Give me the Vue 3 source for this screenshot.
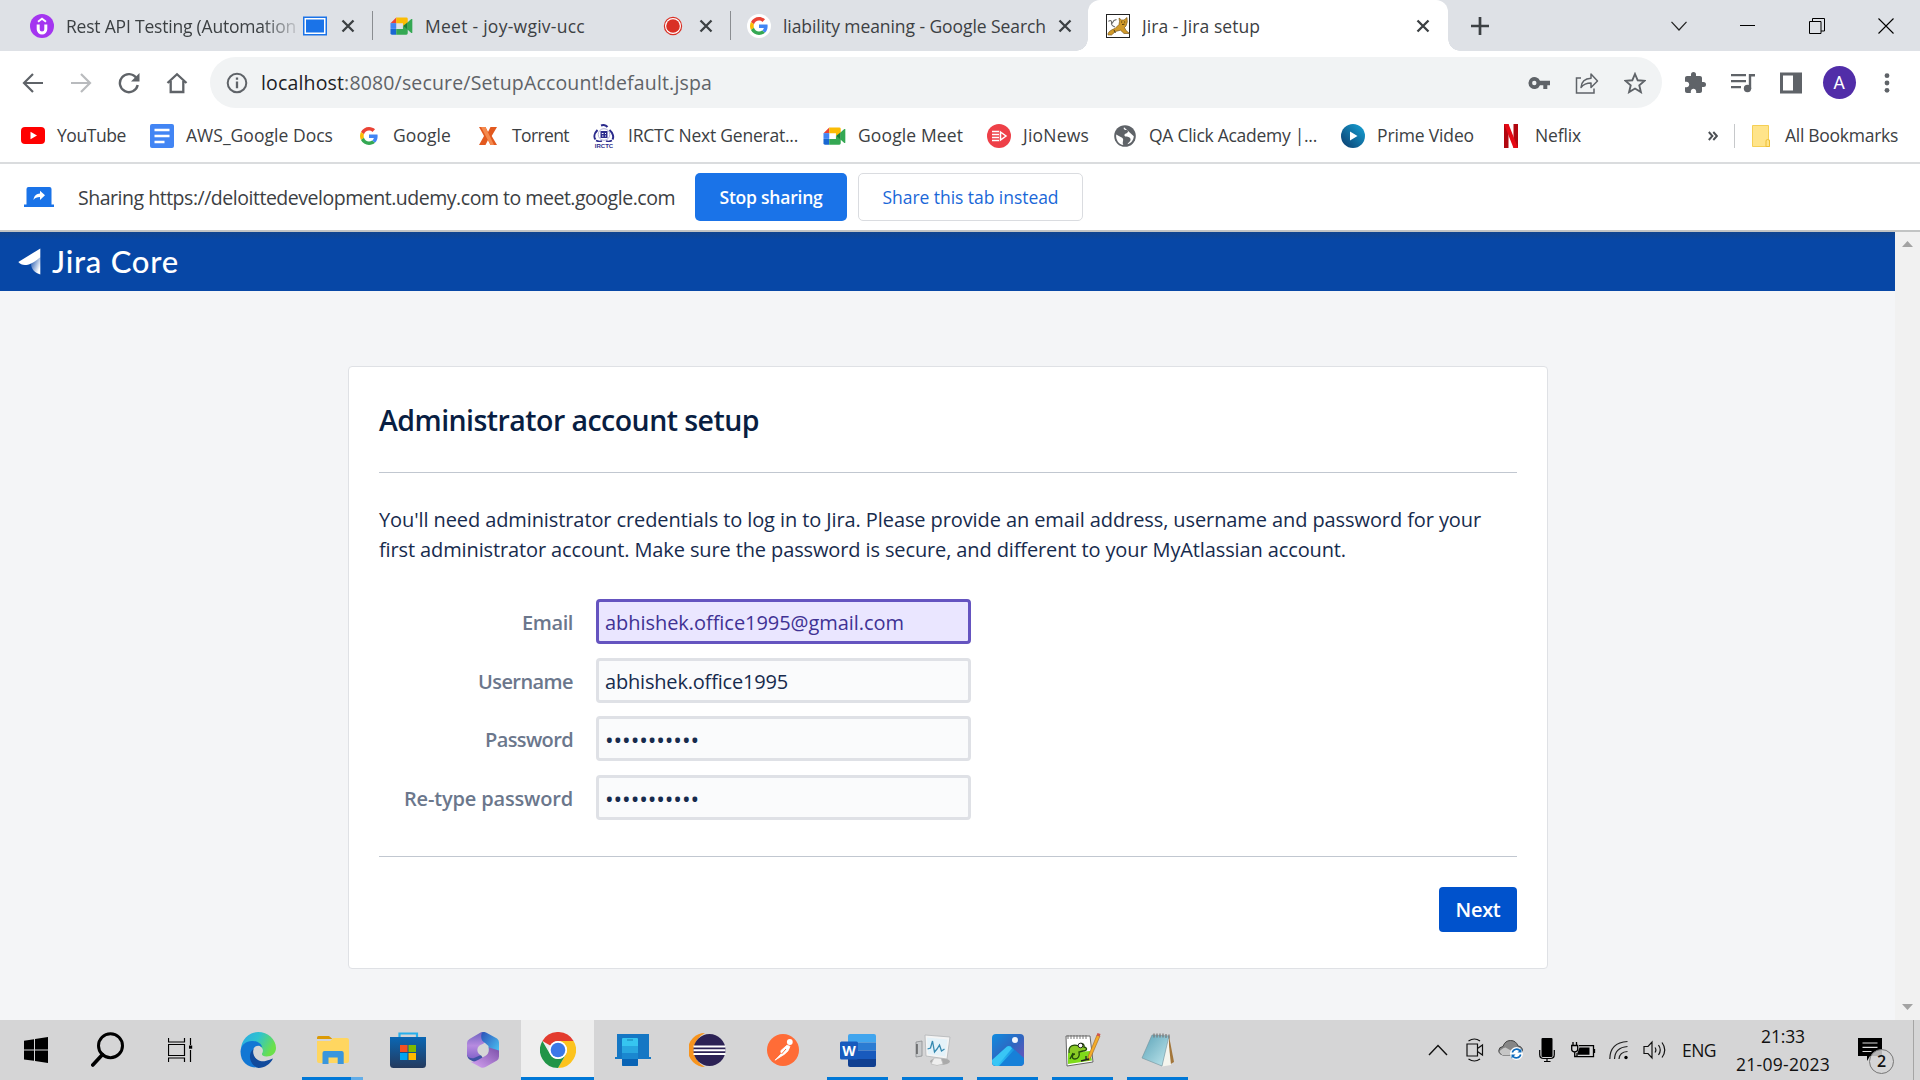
<script setup>
// Tracks the text so that the run takes up the given width in pixels.
const vFit = {
  mounted(el, binding) {
    const natural = el.getBoundingClientRect().width
    const count = el.textContent.length
    el.style.letterSpacing = (binding.value - natural) / count + 'px'
  },
}

const bookmarks = [
  { icon: 'youtube', label: 'YouTube', text: 69, width: 129 },
  { icon: 'docs', label: 'AWS_Google Docs', text: 147, width: 207 },
  { icon: 'google', label: 'Google', text: 58, width: 119 },
  { icon: 'torrent', label: 'Torrent', text: 57, width: 116 },
  { icon: 'irctc', label: 'IRCTC Next Generat...', text: 170, width: 230 },
  { icon: 'meet', label: 'Google Meet', text: 105, width: 165 },
  { icon: 'jio', label: 'JioNews', text: 66, width: 126 },
  { icon: 'globe', label: 'QA Click Academy |...', text: 168, width: 228 },
  { icon: 'prime', label: 'Prime Video', text: 97, width: 158 },
  { icon: 'netflix', label: 'Neflix', text: 46, width: 190 },
]

const fields = [
  { label: 'Email', labelWidth: 51, value: 'abhishek.office1995@gmail.com', valueWidth: 299, filled: true },
  { label: 'Username', labelWidth: 95, value: 'abhishek.office1995', valueWidth: 183 },
  { label: 'Password', labelWidth: 88, value: '•••••••••••', valueWidth: 94, secret: true },
  { label: 'Re-type password', labelWidth: 169, value: '•••••••••••', valueWidth: 94, secret: true },
]
</script>

<template>
  <div class="screen">
    <svg class="defs" width="0" height="0" aria-hidden="true">
      <defs>
        <symbol id="google" viewBox="0 0 48 48">
          <path fill="#ea4335" d="M24 9.5c3.54 0 6.71 1.22 9.21 3.6l6.85-6.85C35.9 2.38 30.47 0 24 0 14.62 0 6.51 5.38 2.56 13.22l7.98 6.19C12.43 13.72 17.74 9.5 24 9.5z" />
          <path fill="#4285f4" d="M46.98 24.55c0-1.57-.15-3.09-.38-4.55H24v9.02h12.94c-.58 2.96-2.26 5.48-4.78 7.18l7.73 6c4.51-4.18 7.09-10.36 7.09-17.65z" />
          <path fill="#fbbc05" d="M10.53 28.59c-.48-1.45-.76-2.99-.76-4.59s.27-3.14.76-4.59l-7.98-6.19C.92 16.46 0 20.12 0 24c0 3.88.92 7.54 2.56 10.78l7.97-6.19z" />
          <path fill="#34a853" d="M24 48c6.48 0 11.93-2.13 15.89-5.81l-7.73-6c-2.15 1.45-4.92 2.3-8.16 2.3-6.26 0-11.57-4.22-13.47-9.91l-7.98 6.19C6.51 42.62 14.62 48 24 48z" />
        </symbol>
        <symbol id="meet" viewBox="0 0 24 20">
          <path fill="#ea4335" d="M6.5 1v6H.5z" />
          <path fill="#4285f4" d="M.5 7h6v6h-6z" />
          <path fill="#1967d2" d="M.5 13h6v6H2a1.5 1.5 0 0 1-1.500-1.500z" />
          <path fill="#fbbc04" d="M6.500 1H17a1.500 1.500 0 0 1 1.500 1.500V7L13.500 10V7h-7z" />
          <path fill="#34a853" d="M6.500 13h7v-3l5 3v4.500A1.500 1.500 0 0 1 17 19H6.500z" />
          <path fill="#188038" d="M13.500 10l5-4v8z" />
          <path fill="#34a853" d="M18.500 6l3.700-3.200c.5-.4 1.100-.2 1.100.5v13.400c0 .7-.6.900-1.100.5L18.500 14z" />
        </symbol>
        <symbol id="close" viewBox="0 0 16 16">
          <path d="M2.500 2.500l11 11M13.500 2.500l-11 11" stroke="#3c4043" stroke-width="2.300" fill="none" />
        </symbol>
        <linearGradient id="gEdge" x1="0" y1="0" x2="1" y2="0.4">
          <stop offset="0" stop-color="#2aa7e6" /><stop offset=".5" stop-color="#2fc3cf" /><stop offset="1" stop-color="#6be04a" />
        </linearGradient>
        <linearGradient id="gBag" x1="0" y1="0" x2="0" y2="1">
          <stop offset="0" stop-color="#0a67b4" /><stop offset="1" stop-color="#243a5e" />
        </linearGradient>
        <linearGradient id="gViolet" x1="0" y1="0" x2="0" y2="1">
          <stop offset="0" stop-color="#6f62c0" /><stop offset=".5" stop-color="#b78be0" /><stop offset="1" stop-color="#8060c8" />
        </linearGradient>
        <linearGradient id="gSky" x1="0" y1="0" x2="1" y2="1">
          <stop offset="0" stop-color="#2b50b8" /><stop offset="1" stop-color="#4fd0f8" />
        </linearGradient>
        <linearGradient id="gOrchid" x1="0" y1="1" x2="1" y2="0">
          <stop offset="0" stop-color="#d9a6f5" /><stop offset="1" stop-color="#7a4fa8" />
        </linearGradient>
        <linearGradient id="gPhoto" x1="0" y1="0" x2="1" y2="1">
          <stop offset="0" stop-color="#0f8ce0" /><stop offset=".5" stop-color="#2f66c0" /><stop offset="1" stop-color="#7a4fb8" />
        </linearGradient>
        <linearGradient id="gHill" x1="0" y1="1" x2="1" y2="0">
          <stop offset="0" stop-color="#30c8f8" /><stop offset="1" stop-color="#1690e0" />
        </linearGradient>
        <linearGradient id="gPrime" x1="0" y1="1" x2="1" y2="0">
          <stop offset="0" stop-color="#0b3a6b" /><stop offset="1" stop-color="#17a5d8" />
        </linearGradient>
        <linearGradient id="gMark" x1="0.100" y1="0.100" x2="0.900" y2="0.700">
          <stop offset="0" stop-color="#2f62b4" /><stop offset="1" stop-color="#fff" />
        </linearGradient>
        <linearGradient id="gPad" x1="0" y1="0" x2="1" y2="1">
          <stop offset="0" stop-color="#5ba3b8" /><stop offset="1" stop-color="#c2e8ee" />
        </linearGradient>
      </defs>
    </svg>

    <!-- Tab strip -->
    <header class="tabs">
      <div class="tab tab-udemy">
        <svg width="24" height="24" viewBox="0 0 24 24"><circle cx="12" cy="12" r="12" fill="#a435f0" /><path d="M8.200 10.500v4.800a3.800 3.800 0 0 0 7.600 0v-4.800" fill="none" stroke="#fff" stroke-width="3" /><path d="M8 7.800l4-3 4 3" fill="none" stroke="#fff" stroke-width="1.900" /></svg>
        <div class="tab-title fade"><span v-fit="230">Rest API Testing (Automation</span></div>
        <svg class="capture" width="24" height="20" viewBox="0 0 24 20"><rect x=".75" y="1.250" width="22.500" height="17.500" fill="#fff" stroke="#1a73e8" stroke-width="1.500" /><rect x="3" y="3.500" width="18" height="13" fill="#1a73e8" /></svg>
        <svg class="x1" width="16" height="16"><use href="#close" /></svg>
      </div>
      <i class="tab-rule"></i>
      <div class="tab tab-meet">
        <svg width="23" height="20"><use href="#meet" /></svg>
        <div class="tab-title"><span v-fit="160">Meet - joy-wgiv-ucc</span></div>
        <svg width="20" height="20" viewBox="0 0 20 20"><circle cx="10" cy="10" r="8.600" fill="#fff" stroke="#d93025" stroke-width="1.200" /><circle cx="10" cy="10" r="6.800" fill="#d93025" /></svg>
        <svg class="x2" width="16" height="16"><use href="#close" /></svg>
      </div>
      <i class="tab-rule"></i>
      <div class="tab tab-search">
        <span class="disc"><svg width="18" height="18"><use href="#google" /></svg></span>
        <div class="tab-title"><span v-fit="263">liability meaning - Google Search</span></div>
        <svg width="16" height="16"><use href="#close" /></svg>
      </div>
      <div class="tab tab-active">
        <svg width="24" height="24" viewBox="0 0 24 24"><rect x=".5" y=".5" width="23" height="23" fill="#fff" stroke="#222" /><path d="M2 19.500c1-2.500 4-4 7-5l4-4 .5-3-.5-3.500 2.500 2h2.500l3-2.500.3 4.500-1.300 4-1.500 1.500 1.500 3 3.500 3H18l-3.500-3.300-5 1.300-4 3.500H2z" fill="#d19a2a" stroke="#6b4a10" stroke-width=".6" /><path d="M2.500 7.500c2-2 3.500-.5 3 1.500s1 3 3.500 4M6 9.500l2-3 2.500-1" fill="none" stroke="#6a6a6a" stroke-width="1.100" /><path d="M15 8h1.200M18 8h1.200M16 10.500l2.500-.3M8 16l1.500 3" stroke="#2d2309" stroke-width=".8" /></svg>
        <div class="tab-title"><span v-fit="118">Jira - Jira setup</span></div>
        <svg width="16" height="16"><use href="#close" /></svg>
      </div>
      <svg class="plus" width="20" height="20" viewBox="0 0 20 20"><path d="M10 1v18M1 10h18" stroke="#3c4043" stroke-width="2.700" /></svg>
      <div class="window">
        <span><svg width="16" height="10" viewBox="0 0 16 10"><path d="M.5 .8L8 9 15.500 .8" fill="none" stroke="#222" stroke-width="1.200" /></svg></span>
        <span><svg width="15" height="3" viewBox="0 0 15 3"><path d="M0 1.500h15" stroke="#000" /></svg></span>
        <span><svg width="16" height="16" viewBox="0 0 16 16"><path d="M.5 3.500h11.500v12H.5zM3.500 3.500V.5h12V13H12" fill="none" stroke="#000" /></svg></span>
        <span><svg width="16" height="16" viewBox="0 0 16 16"><path d="M.5 .5l15 15M15.500 .5l-15 15" stroke="#000" stroke-width="1.100" /></svg></span>
      </div>
    </header>

    <!-- Toolbar -->
    <div class="toolbar">
      <span class="tool"><svg width="22" height="22" viewBox="0 0 22 22"><path d="M21 11H2.500M11 2L2 11l9 9" fill="none" stroke="#5f6368" stroke-width="2.200" /></svg></span>
      <span class="tool"><svg width="22" height="22" viewBox="0 0 22 22"><path d="M1 11h18.500M11 2l9 9-9 9" fill="none" stroke="#b9bbbe" stroke-width="2.200" /></svg></span>
      <span class="tool"><svg width="22" height="22" viewBox="0 0 22 22"><path d="M18.300 6A9 9 0 1 0 19.700 13" fill="none" stroke="#5f6368" stroke-width="2.400" /><path d="M21.500 1v8.500H13z" fill="#5f6368" /></svg></span>
      <span class="tool"><svg width="22" height="22" viewBox="0 0 22 22"><path d="M1.500 11L11 2.200 20.500 11M4.700 9v11h12.600V9" fill="none" stroke="#5f6368" stroke-width="2.300" /></svg></span>
      <div class="omnibox">
        <svg width="22" height="22" viewBox="0 0 22 22"><circle cx="11" cy="11" r="9.300" fill="none" stroke="#5f6368" stroke-width="2" /><path d="M11 9.500v6.700M11 5.500v2.300" stroke="#5f6368" stroke-width="2.300" /></svg>
        <div class="url"><span v-fit="451"><b>localhost</b>:8080/secure/SetupAccount!default.jspa</span></div>
        <span class="tool"><svg width="22" height="14" viewBox="0 0 22 14"><path fill="#5f6368" fill-rule="evenodd" d="M12 4.800A6 6 0 1 0 12 9.200h3.300V13h4V9.200H22V4.800zM6.300 4.800a2.200 2.200 0 1 1 0 4.400 2.200 2.200 0 0 1 0-4.400z" /></svg></span>
        <span class="tool"><svg width="24" height="22" viewBox="0 0 24 22"><path d="M6 6H1.500v15H19v-4.500" fill="none" stroke="#5f6368" stroke-width="1.500" /><path d="M6 15.500c.5-6 4-9 10-9.200V2l6.500 7-6.500 6.500V11c-4.500 0-7.500 1.200-10 4.500z" fill="none" stroke="#5f6368" stroke-width="1.500" stroke-linejoin="round" /></svg></span>
        <span class="tool"><svg width="22" height="22" viewBox="0 0 22 22"><path d="M11 2l2.700 6.300 6.800.6-5.200 4.500 1.600 6.700L11 16.500l-5.900 3.600 1.600-6.700L1.500 8.900l6.800-.6z" fill="none" stroke="#5f6368" stroke-width="1.900" /></svg></span>
      </div>
      <span class="tool tool-ext"><svg width="24" height="24" viewBox="0 0 24 24"><path fill="#5f6368" d="M20.500 11H19V7c0-1.100-.9-2-2-2h-4V3.500a2.500 2.500 0 0 0-5 0V5H4c-1.100 0-1.990.9-1.990 2v3.800H3.500c1.490 0 2.700 1.210 2.700 2.700s-1.210 2.700-2.700 2.700H2V20c0 1.100.9 2 2 2h3.800v-1.500c0-1.490 1.210-2.700 2.700-2.700s2.700 1.210 2.700 2.700V22H17c1.100 0 2-.9 2-2v-4h1.500a2.500 2.500 0 0 0 0-5z" /></svg></span>
      <span class="tool"><svg width="24" height="20" viewBox="0 0 24 20"><path d="M0 2.200h15M0 8.200h15M0 14.200h10" stroke="#5f6368" stroke-width="2.200" /><circle cx="16.500" cy="15.500" r="3.700" fill="#5f6368" /><path d="M19 16V2.200h5" fill="none" stroke="#5f6368" stroke-width="2.400" /></svg></span>
      <span class="tool"><svg width="22" height="22" viewBox="0 0 22 22"><path fill="#5f6368" fill-rule="evenodd" d="M0 .5h22v21H0zM3 3.500v15h10v-15z" /></svg></span>
      <span class="tool"><span class="avatar">A</span></span>
      <span class="tool"><svg width="6" height="20" viewBox="0 0 6 20"><circle cx="3" cy="2.700" r="2.400" fill="#5f6368" /><circle cx="3" cy="10" r="2.400" fill="#5f6368" /><circle cx="3" cy="17.300" r="2.400" fill="#5f6368" /></svg></span>
    </div>

    <!-- Bookmarks bar -->
    <nav class="bookmarks">
      <div v-for="b in bookmarks" :key="b.label" class="bookmark" :style="{ width: b.width + 'px' }">
        <span class="fav">
          <svg v-if="b.icon === 'youtube'" width="24" height="17" viewBox="0 0 24 17"><rect width="24" height="17" rx="4" fill="#f00" /><path d="M9.500 4.800l6.500 3.700-6.500 3.700z" fill="#fff" /></svg>
          <svg v-else-if="b.icon === 'docs'" width="24" height="24" viewBox="0 0 24 24"><rect width="24" height="24" rx="2" fill="#4285f4" /><path d="M4.500 6h15M4.500 12h15M4.500 18h10" stroke="#fff" stroke-width="2.500" /></svg>
          <svg v-else-if="b.icon === 'google'" width="18" height="18"><use href="#google" /></svg>
          <svg v-else-if="b.icon === 'torrent'" width="18" height="18" viewBox="0 0 18 18"><path d="M0 0h6.500L9 5l2.500-5H18l-5.300 9L18 18h-6.500L9 13l-2.500 5H0l5-9z" fill="#e2591f" /><path d="M2 0h4.500l8.500 18h-3.500z" fill="#f4894d" /></svg>
          <svg v-else-if="b.icon === 'irctc'" width="22" height="24" viewBox="0 0 22 24"><g fill="none" stroke="#2b2b8c" stroke-width="2"><path d="M8 1.500q4-1.500 6.500 1.500M4.500 6C1.500 9 .5 13 2.500 15.500M16.500 6c3.500 3 4.500 7 3 9.500" /><path d="M3 16.500q3 1.500 6 .5M13 17q3 1 6-.5" stroke-width="1.400" /></g><circle cx="11" cy="10.500" r="5.800" fill="none" stroke="#9a9acb" stroke-width=".8" /><rect x="7.500" y="7" width="7" height="7" fill="#2b2b8c" /><path d="M8.800 9.500h1.700m1.500 0h1M9 12h1.500m1.500 0h1" stroke="#fff" /><text x="11" y="23.500" text-anchor="middle" class="irctc">IRCTC</text></svg>
          <svg v-else-if="b.icon === 'meet'" width="23" height="20"><use href="#meet" /></svg>
          <svg v-else-if="b.icon === 'jio'" width="24" height="24" viewBox="0 0 24 24"><circle cx="12" cy="12" r="12" fill="#ee4048" /><path d="M5 7.500h7M5 10.500h7M5 13.500h7M5 16.500h7" stroke="#fff" stroke-width="1.600" /><path d="M13.500 8l5.500 4-5.500 4z" fill="none" stroke="#fff" stroke-width="1.500" /></svg>
          <svg v-else-if="b.icon === 'globe'" width="22" height="22" viewBox="0 0 22 22"><circle cx="11" cy="11" r="10.800" fill="#5f6368" /><path d="M10 2.300c-1 2.500 1 2.700 3 2.700s1 3-1 3.500-2 2.500-.5 3 4.500 0 5 2.500-2.500 3.500-3 5.300c4-1.200 6-4.300 6.300-8M2.200 9.500l4.500 2.500c2.500 1 2.800 2 2.300 4s-.2 3.500.5 4c-4.500-.5-8-5-7.300-10.500z" fill="#fff" /></svg>
          <svg v-else-if="b.icon === 'prime'" width="24" height="24" viewBox="0 0 24 24"><circle cx="12" cy="12" r="12" fill="url(#gPrime)" /><path d="M9 7.500l7.500 4.500L9 16.500z" fill="#fff" /></svg>
          <svg v-else width="14" height="24" viewBox="0 0 14 24"><path d="M0 0h4.500v24H0zM9.500 0H14v24H9.500z" fill="#b1060f" /><path d="M0 0h4.500L14 24H9.500z" fill="#e50914" /></svg>
        </span>
        <span v-fit="b.text" class="caption">{{ b.label }}</span>
      </div>
      <svg class="more" width="10" height="10" viewBox="0 0 10 10"><path d="M.8 1l3.600 4L.8 9M5.300 1l3.600 4-3.600 4" fill="none" stroke="#4b4f54" stroke-width="1.900" /></svg>
      <i class="bookmark-rule"></i>
      <svg class="folder" width="18" height="22" viewBox="0 0 18 22"><path d="M.5 .5h16v14l1 .5v6.500H.5z" fill="#ffe48a" stroke="#f5cf55" /><path d="M14 21.500V16q0-1.500 1.700-1.500t1.800 1.500v5.500z" fill="#ffe48a" stroke="#eebf35" /></svg>
      <span v-fit="113" class="caption">All Bookmarks</span>
    </nav>

    <!-- Sharing notice -->
    <div class="infobar">
      <svg width="30" height="20" viewBox="0 0 30 20"><path d="M2.500 17.500V2q0-2 2-2h21q2 0 2 2v15.500H30V20H0v-2.500z" fill="#1a73e8" /><path d="M9.500 13c.5-4.500 3-6.200 6.500-6.500V3.700l5 4.600-5 4.600V10c-3 0-5 .8-6.500 3z" fill="#fff" /></svg>
      <div class="infotext"><span v-fit="597">Sharing https://deloittedevelopment.udemy.com to meet.google.com</span></div>
      <button class="stop"><span v-fit="103">Stop sharing</span></button>
      <button class="share"><span v-fit="176">Share this tab instead</span></button>
    </div>

    <!-- Page -->
    <div class="viewport">
      <main class="page">
        <div class="jira">
          <svg width="23" height="27" viewBox="0 0 23 27"><path d="M22.300 9.500V26.500c-5-1.500-9.300-5-9.300-11z" fill="url(#gMark)" /><path d="M22.300 .5V9.500C18 13 15 14.500 13 15.500 8 18 3 17.500 .3 14z" fill="#fff" /></svg>
          <div class="brand"><span v-fit="127">Jira Core</span></div>
        </div>
        <section class="card">
          <h1><span v-fit="380">Administrator account setup</span></h1>
          <p>
            <span v-fit="1102">You'll need administrator credentials to log in to Jira. Please provide an email address, username and password for your</span>
            <span v-fit="967">first administrator account. Make sure the password is secure, and different to your MyAtlassian account.</span>
          </p>
          <form>
            <div v-for="f in fields" :key="f.label" class="field">
              <label><span v-fit="f.labelWidth">{{ f.label }}</span></label>
              <div class="input" :class="{ filled: f.filled, secret: f.secret }"><span v-fit="f.valueWidth">{{ f.value }}</span></div>
            </div>
          </form>
          <footer><button class="next"><span v-fit="45">Next</span></button></footer>
        </section>
      </main>
      <aside class="scrollbar">
        <svg width="11" height="6" viewBox="0 0 11 6"><path d="M0 6l5.500-6L11 6z" fill="#a3a3a3" /></svg>
        <svg width="11" height="6" viewBox="0 0 11 6"><path d="M0 0h11L5.500 6z" fill="#a3a3a3" /></svg>
      </aside>
    </div>

    <!-- Taskbar -->
    <div class="taskbar">
      <span class="sys"><svg width="24" height="26" viewBox="0 0 24 26"><path d="M0 3.700l10-1.500v10.200H0zM11 2l13-2v12.400H11zM0 13.500h10v10.200L0 22.400zM11 13.500h13V26l-13-1.900z" fill="#000" /></svg></span>
      <span class="sys"><svg width="34" height="36" viewBox="0 0 34 36"><circle cx="19.500" cy="13.700" r="12" fill="none" stroke="#000" stroke-width="3" /><path d="M11.500 22.500L1.800 33" stroke="#000" stroke-width="3.600" stroke-linecap="round" /></svg></span>
      <span class="sys"><svg width="25" height="26" viewBox="0 0 25 26"><path d="M.5 1v4h16V1M.5 25v-4h16v4M.5 7.500h16v11H.5zM22.500 1v7M22.500 13v12" fill="none" stroke="#000" stroke-width="1.200" /><path d="M21 8.500h3.200v3.200H21z" /></svg></span>
      <span class="app app-first"><svg width="36" height="36" viewBox="0 0 36 36"><path d="M1 18A17.500 17.500 0 0 1 18 0c10 0 18 7.500 18 16 0 5-4 8.500-9.500 8.500-3.500 0-5-1.500-4.500-3 1.500-2 1.200-5-1-6.500C16 10 4 10 1 18z" fill="url(#gEdge)" /><path d="M.5 19.500C1 12 7 8.500 13 9c5 .3 8.500 3 9.300 6.500-3-3-8-2-9 2C11 26 20 33 29 30.500 21 39 .5 37.500 .5 19.500z" fill="#1277d4" /><path d="M13.500 17c-2 8 5 13.500 12 12 3.500-.8 5.500-2 7.500-2.500-2.500 5.500-8.500 9.500-14.500 9.500C9 33 7.500 21 13.500 17z" fill="#114a9c" /></svg></span>
      <span class="app grouped"><svg width="32" height="28" viewBox="0 0 32 28"><path d="M0 1.500Q0 0 1.500 0H12l3.500 3H0z" fill="#dc9a05" /><path d="M0 5h13l3.500-3H30q2 0 2 2v21q0 2-2 2H2q-2 0-2-2z" fill="#ffd660" /><path d="M5.500 28V17q0-2 2-2h17.200q2 0 2 2v11h-6v-6.500h-9.200V28z" fill="#3a96dd" /></svg></span>
      <span class="app"><svg width="36" height="36" viewBox="0 0 36 36"><path d="M9.500 7V1.500h17.500V7" fill="none" stroke="#27b0ec" stroke-width="2.200" /><path d="M0 5h36v27.500q0 3.500-3.500 3.500h-29Q0 36 0 32.500z" fill="url(#gBag)" /><path d="M10 13h7.500v7H10z" fill="#f25022" /><path d="M18.500 13H26v7h-7.500z" fill="#7fba00" /><path d="M10 21h7.500v7H10z" fill="#00a4ef" /><path d="M18.500 21H26v7h-7.500z" fill="#ffb900" /></svg></span>
      <span class="app"><svg width="32" height="36" viewBox="0 0 32 36"><path d="M14.500 0L2.500 7Q0 8.500 0 11v13l4 3.500 9-3V14l7-5-3-7z" fill="url(#gViolet)" /><path d="M15 .3q2-.8 4 .2l11 6q2 1.500 2 4v14l-10.500-5V14l-4-3.500q-5-2.500-2.500-10.200z" fill="url(#gSky)" /><path d="M0 23q2 4 7 3l7-3 3 5-6 4-8.500-4.500Q.5 26 0 23z" fill="#3f52a4" /><path d="M32 18.500v6q0 2.500-2 4l-11.500 6.500q-2.500 1.500-5 .2L3 29.500q4 1 8-1.500l8-4.500q3-2 3-8z" fill="url(#gOrchid)" /><circle cx="16" cy="18" r="5.700" fill="#d6d6d6" /></svg></span>
      <span class="app current"><svg width="36" height="36" viewBox="0 0 36 36"><path d="M2.400 9A18 18 0 0 1 33.600 9H18a9 9 0 0 0-7.800 4.500z" fill="#e33b2e" /><path d="M33.600 9A18 18 0 0 1 18 36l7.800-13.500A9 9 0 0 0 18 9z" fill="#fcc31e" /><path d="M2.400 9A18 18 0 0 0 18 36l7.800-13.500a9 9 0 0 1-15.600 0z" fill="#219447" /><circle cx="18" cy="18" r="9" fill="#fff" /><circle cx="18" cy="18" r="7.300" fill="#3b78e7" /></svg></span>
      <span class="app"><svg width="36" height="32" viewBox="0 0 36 32"><path d="M2 0h32v23h2v2H0v-2h2z" fill="#1577c4" /><rect x="7" y="4" width="16" height="28" rx="1" fill="#36c5f0" /><path d="M7 12h16v7H7z" fill="#28a6e0" /><path d="M7 19h16v6H7z" fill="#1a87d0" /><path d="M7 25h16v6q0 1-1 1H8q-1 0-1-1z" fill="#0863b5" /><path d="M12 6h6" stroke="#1580b5" /></svg></span>
      <span class="app"><svg width="37" height="34" viewBox="0 0 37 34"><path d="M16 0a17 17 0 0 0 0 34A19 19 0 0 1 16 0z" fill="#f7941e" /><circle cx="20.500" cy="17" r="16" fill="#2c2255" /><path d="M4.500 13.500h32M4.500 17.300h32M4.500 21h32" stroke="#fff" stroke-width="1.900" /></svg></span>
      <span class="app"><svg width="32" height="32" viewBox="0 0 32 32"><circle cx="16" cy="16" r="16" fill="#ff6c37" /><circle cx="22.800" cy="8" r="2.900" fill="#fff" /><path d="M20 11.200l3 1.200-2 4.500-3.500 3.300-9.500 6 6.300-6.500-.5-3z" fill="#fff" stroke="#fff" stroke-width=".8" /><path d="M14.500 20l4.500-5" stroke="#ff6c37" /></svg></span>
      <span class="app open"><svg width="36" height="33" viewBox="0 0 36 33"><path d="M8 2q0-2 2-2h24q2 0 2 2v6.500H8z" fill="#41a5ee" /><path d="M8 8.500h28v8H8z" fill="#2b7cd3" /><path d="M8 16.500h28V25H8z" fill="#185abd" /><path d="M8 25h28v6q0 2-2 2H10q-2 0-2-2z" fill="#103f91" /><rect y="7.500" width="18" height="18" rx="1.500" fill="#185abd" /><text x="9" y="21.500" text-anchor="middle" class="word">W</text></svg></span>
      <span class="app open"><svg width="36" height="32" viewBox="0 0 36 32"><ellipse cx="25" cy="27.500" rx="10" ry="3.500" fill="#aaa" /><path d="M1 8l6-1v15l-6 1z" fill="#c9cbcd" stroke="#8c8e90" stroke-width=".8" /><path d="M2 10v10" stroke="#444" stroke-width="1.200" /><path d="M19 24h7l2 6q-6 3-12 0z" fill="#eee" stroke="#bbb" stroke-width=".8" /><path d="M10 1l25 2-3 22-21-3z" fill="#f4f4f4" stroke="#b2b5b8" stroke-width=".8" /><path d="M12 3.500l20.500 2-2.300 17L13 20z" fill="#e4f2f9" /><path d="M12.500 15l3-1 2-7 2 11 2.500-3 2.500-4 2 6 3-2" fill="none" stroke="#3689b0" stroke-width="1.300" /></svg></span>
      <span class="app open"><svg width="32" height="32" viewBox="0 0 32 32"><rect width="32" height="32" rx="4" fill="url(#gPhoto)" /><path d="M0 26L15 12.500q2-1.500 4 0L32 24v4q0 4-4 4H4q-4 0-4-4z" fill="#1780d8" /><path d="M3 31l13.500-14q2-2 1-5.500l2 1.500L22 16 7 32H4z" fill="url(#gHill)" /><path d="M0 26L15 12.500q3-1.500 5 2L5 32q-5 0-5-4z" fill="#39c6f5" /><circle cx="23" cy="6" r="3" fill="#f2f6fc" /></svg></span>
      <span class="app open"><svg width="36" height="34" viewBox="0 0 36 34"><path d="M1 3h24l3 26-26 4z" fill="#fff" stroke="#666" /><path d="M3 2v4M6 2v4M9 2v4M12 2v4M15 2v4M18 2v4M21 2v4" stroke="#777" stroke-width="1" /><path d="M3 20l22-2 2 9.500L3 31z" fill="#7fdb1a" /><path d="M4 20c-1-8 5-9 10-7 0-4 6-3 5 1 4 1 3 4-1 4l-4 1c1 4-1 7-4 7-4 0-3-5 0-5M8 20l-3 6" fill="#8ac926" stroke="#254b0c" stroke-width="1.300" /><circle cx="15.500" cy="12.500" r="2.300" fill="#fff" stroke="#222" /><path d="M32 2l3 1-9 21-3 4 .3-5z" fill="#f4ac2a" stroke="#a06620" stroke-width=".6" /><path d="M31.500 2.500l1-2.500 3 1-.8 2.500z" fill="#d2564b" /><path d="M16 28l8-2M21 23v4" stroke="#222" stroke-width="1.300" /></svg></span>
      <span class="app open"><svg width="34" height="34" viewBox="0 0 34 34"><path d="M28 3l5 26-5 3z" fill="#a3763a" /><path d="M27 3l3 29-9 1.500z" fill="#f5f5ee" /><path d="M11 2l17 1-7 30L1 25z" fill="url(#gPad)" stroke="#71909a" stroke-width=".6" /><path d="M13 .5v4M16 .5v4M19 .5v4M22 .5v4M25 1v4M28 1.500v4" stroke="#777" stroke-width="1.200" /></svg></span>

      <div class="tray">
        <span class="t-up"><svg width="20" height="12" viewBox="0 0 20 12"><path d="M1 11l9-9.500L19 11" fill="none" stroke="#111" stroke-width="1.400" /></svg></span>
        <span><svg width="18" height="24" viewBox="0 0 18 24"><path d="M1 6h10.500v12H1zM11.500 10.500L16.500 7v10l-5-3.500M2.500 3q6-4 11.500 0M2.500 21q6 4 11.500 0" fill="none" stroke="#111" stroke-width="1.200" /></svg></span>
        <span><svg width="26" height="22" viewBox="0 0 26 22"><path d="M5 16Q.7 15 .8 11.500.9 8 5 7.500 7 1.500 12.500 1.500T20 7q4.500.5 4.500 5 0 3-2 4z" fill="#868686" stroke="#444" /><path d="M1.500 13q1-3 6-4.500l9 5-5 2.500H4z" fill="#c6c6c6" /><circle cx="18.500" cy="14.500" r="6.500" fill="#fff" /><path d="M14.300 13.500a4.500 4.500 0 0 1 8-1.500M22.700 15.500a4.500 4.500 0 0 1-8 1.500" fill="none" stroke="#0f6cbd" stroke-width="1.600" /><path d="M23.500 9.500v4h-4zM13.500 19.500v-4h4z" fill="#0f6cbd" /></svg></span>
        <span><svg width="16" height="24" viewBox="0 0 16 24"><rect x="2.500" width="11" height="19" rx="1" fill="#000" /><path d="M.7 12v4.500q0 4 4 4h6.600q4 0 4-4V12M8 20v3.500M5 23.500h6.500" fill="none" stroke="#000" stroke-width="1.200" /></svg></span>
        <span><svg width="25" height="18" viewBox="0 0 25 18"><path d="M8 4.600h14.500v11H6V12M23.500 8v4M2 1v3.500M5.500 1v3.500M.7 4.500h6v4q0 2-3 2.500-3-.5-3-2.500zM3.700 11v4.500h2.500" fill="none" stroke="#000" stroke-width="1.300" /><path d="M8.500 6.500H18.500V13.800H6.500v-2z" /></svg></span>
        <span><svg width="20" height="20" viewBox="0 0 20 20"><g fill="none" stroke="#222" stroke-width="1.200"><path d="M.8 19Q1 2.500 18.500 1.500" /><path d="M5.500 19Q6 7.500 18.500 6.500" /><path d="M10 19q.5-7 8.500-7.500" /></g><circle cx="17" cy="17.500" r="1.700" /></svg></span>
        <span><svg width="24" height="20" viewBox="0 0 24 20"><path d="M1 6.500h4L9 2v16l-4-4.500H1zM12 7.500q1.800 2.500 0 5M15.500 5q3.500 5 0 10M19 2.500q5.500 7.500 0 15" fill="none" stroke="#111" stroke-width="1.200" /></svg></span>
        <div class="lang"><span v-fit="34">ENG</span></div>
        <div class="clock"><span v-fit="44">21:33</span><span v-fit="94">21-09-2023</span></div>
        <div class="notes">
          <svg width="24" height="24" viewBox="0 0 24 24"><path d="M0 0h24v18H12l-3 5v-5H0z" /><path d="M4.500 5h15M4.500 9.300h15M4.500 13.500h9" stroke="#ddd" stroke-width="1.200" /></svg>
          <b>2</b>
        </div>
        <i class="peek"></i>
      </div>
    </div>
  </div>
</template>

<style>
body {
  margin: 0;
  overflow: hidden;
}
</style>

<style scoped>
.screen {
  width: 1920px;
  height: 1080px;
  display: flex;
  flex-direction: column;
  overflow: hidden;
  background: #fff;
  color: #3c4043;
  font-family: "Open Sans", "Noto Sans", sans-serif;
  font-size: 17.500px;
  line-height: 24px;
  white-space: nowrap;
}
.defs { position: absolute; }
svg { display: block; flex: none; }
span[style] { display: inline-block; }
button { border: 0; padding: 0; font: inherit; }

/* Tab strip */
.tabs {
  height: 51px;
  flex: none;
  display: flex;
  align-items: center;
  background: #dee1e6;
}
.tab { height: 51px; display: flex; align-items: center; flex: none; box-sizing: border-box; }
.tab-title { flex: 1; margin-left: 12px; overflow: hidden; }
.tab-udemy { width: 372px; padding: 0 16px 0 30px; }
.fade { -webkit-mask-image: linear-gradient(90deg, #000 195px, transparent 238px); mask-image: linear-gradient(90deg, #000 195px, transparent 238px); }
.capture { margin-left: 3px; }
.x1 { margin-left: 13px; }
.tab-rule { width: 1px; height: 29px; background: #8a8d91; flex: none; }
.tab-meet { width: 357px; padding: 0 16px 0 17px; }
.x2 { margin-left: 15px; }
.tab-search { width: 357px; padding: 0 15px 0 16px; }
.disc { width: 24px; height: 24px; border-radius: 50%; background: #fff; display: flex; align-items: center; justify-content: center; }
.tab-active { position: relative; width: 360px; padding: 0 17px 0 18px; background: #fff; border-radius: 12px 12px 0 0; }
.tab-active::before, .tab-active::after {
  content: "";
  position: absolute;
  bottom: 0;
  width: 12px;
  height: 12px;
}
.tab-active::before { left: -12px; background: radial-gradient(circle at 0 0, transparent 11.500px, #fff 12px); }
.tab-active::after { right: -12px; background: radial-gradient(circle at 100% 0, transparent 11.500px, #fff 12px); }
.plus { margin-left: 22px; }
.window { display: flex; margin-left: auto; height: 43px; }
.window span { width: 69px; display: flex; align-items: center; justify-content: center; }

/* Toolbar */
.toolbar { height: 58px; flex: none; display: flex; align-items: center; padding: 5px 9px 0; box-sizing: border-box; }
.tool { width: 48px; flex: none; display: flex; align-items: center; justify-content: center; }
.omnibox { width: 1452px; height: 51px; margin-left: 9px; padding: 0 3px 0 16px; box-sizing: border-box; border-radius: 26px; background: #f1f3f4; display: flex; align-items: center; flex: none; }
.url { flex: 1; margin-left: 13px; font-size: 19.500px; color: #5f6368; }
.url b { font-weight: 400; color: #202124; }
.tool-ext { margin-left: 9px; }
.avatar { width: 33px; height: 33px; border-radius: 50%; background: #512da8; color: #fff; font: 18px/33px Roboto, sans-serif; text-align: center; }

/* Bookmarks */
.bookmarks { height: 55px; flex: none; display: flex; align-items: center; padding-left: 21px; box-sizing: border-box; border-bottom: 2px solid #dadcde; }
.bookmark { display: flex; align-items: center; flex: none; }
.caption { padding-bottom: 2px; }
.fav { width: 24px; height: 24px; margin-right: 12px; flex: none; display: flex; align-items: center; justify-content: center; }
.irctc { font: 700 6px "Liberation Sans", sans-serif; fill: #2b2b8c; }
.more { margin-left: 19px; }
.bookmark-rule { width: 1px; height: 24px; margin-left: 16px; background: #c6c8ca; }
.folder { margin: 0 15px 0 17px; }

/* Sharing notice */
.infobar { height: 68px; flex: none; display: flex; align-items: center; box-sizing: border-box; padding-left: 24px; border-bottom: 2px solid #c2c4c4; }
.infotext { width: 617px; margin-left: 24px; padding-top: 2px; font-size: 19.500px; }
.stop, .share { height: 48px; border-radius: 5px; box-sizing: border-box; }
.stop { width: 152px; background: #1a73e8; color: #fff; font-weight: 600; }
.share { width: 225px; margin-left: 11px; background: #fff; border: 1px solid #dadce0; color: #1a67d8; font-weight: 500; }

/* Page */
.viewport { height: 788px; flex: none; display: flex; }
.page { width: 1895px; background: #f4f5f7; }
.jira { height: 59px; display: flex; align-items: center; padding-left: 18px; box-sizing: border-box; background: linear-gradient(#10458f, #0747a6 8px); color: #fff; }
.brand { margin-left: 11px; font-family: Lato, "Open Sans", sans-serif; font-size: 31px; font-weight: 500; line-height: 36px; padding-bottom: 2px; }
.card { width: 1200px; height: 603px; margin: 75px 0 0 348px; padding: 0 30px; box-sizing: border-box; background: #fff; border: 1px solid #dfe1e5; border-radius: 4px; color: #172b4d; }
h1 { margin: 0; height: 106px; padding-top: 33px; box-sizing: border-box; border-bottom: 1px solid #c1c7d0; font-size: 28.500px; line-height: 40px; font-weight: 600; color: #091e42; }
p { margin: 32px 0 34px; display: flex; flex-direction: column; align-items: flex-start; font-size: 20px; line-height: 30px; }
form { height: 258px; box-sizing: border-box; border-bottom: 1px solid #c1c7d0; display: flex; flex-direction: column; gap: 13.600px; }
.field { display: flex; align-items: center; font-size: 20px; height: 45px; }
label { width: 194px; margin-right: 23px; padding-top: 3px; text-align: right; font-weight: 600; color: #6b778c; }
.input { width: 375px; height: 45px; padding: 1px 0 0 6px; box-sizing: border-box; border: 3px solid #dfe1e6; border-radius: 4px; background: #fafbfc; line-height: 39px; }
.input.filled { border-color: #6554c0; background: #eae6ff; color: #403294; }
.input.secret { font-size: 23px; padding-top: 2px; }
footer { display: flex; justify-content: flex-end; padding-top: 30px; }
.next { width: 78px; height: 45px; border-radius: 4px; background: #0052cc; color: #fff; font-size: 20px; font-weight: 600; }
.scrollbar { width: 25px; background: #f1f1f1; display: flex; flex-direction: column; align-items: center; justify-content: space-between; padding: 9px 0 10px; box-sizing: border-box; }

/* Taskbar */
.taskbar { height: 60px; flex: none; display: flex; background: #d5d5d6; color: #111; }
.sys, .app { display: flex; align-items: center; justify-content: center; flex: none; box-sizing: border-box; }
.sys { width: 72px; }
.app { position: relative; width: 75px; }
.app-first { margin-left: 4px; }
.current { background: linear-gradient(#eee, #eee) 1px 0 / 73px 100% no-repeat; }
.open::after, .current::after, .grouped::after { content: ""; position: absolute; bottom: 0; left: 7px; width: 61px; height: 3px; background: #0078d7; }
.current::after { left: 1px; width: 73px; }
.grouped::after { background: linear-gradient(90deg, #0078d7 49px, #62ade8 49px); }
.word { font: 700 14px "Open Sans", sans-serif; fill: #fff; }
.tray { margin-left: auto; display: flex; align-items: center; }
.tray > span { width: 36px; display: flex; justify-content: center; }
.tray > .t-up { width: 38px; }
.lang { width: 54px; margin-left: 9px; }
.clock { width: 94px; display: flex; flex-direction: column; align-items: center; line-height: 28px; }
.notes { position: relative; width: 36px; margin: 0 19px 0 28px; }
.notes b { position: absolute; left: 11px; top: 11px; width: 23px; height: 23px; border: 1px solid #777; border-radius: 50%; background: rgba(213, 213, 214, .85); font: 600 16px/23px "Open Sans", sans-serif; text-align: center; }
.peek { width: 1px; height: 60px; margin-right: 6px; background: #a5a5a5; }
</style>
